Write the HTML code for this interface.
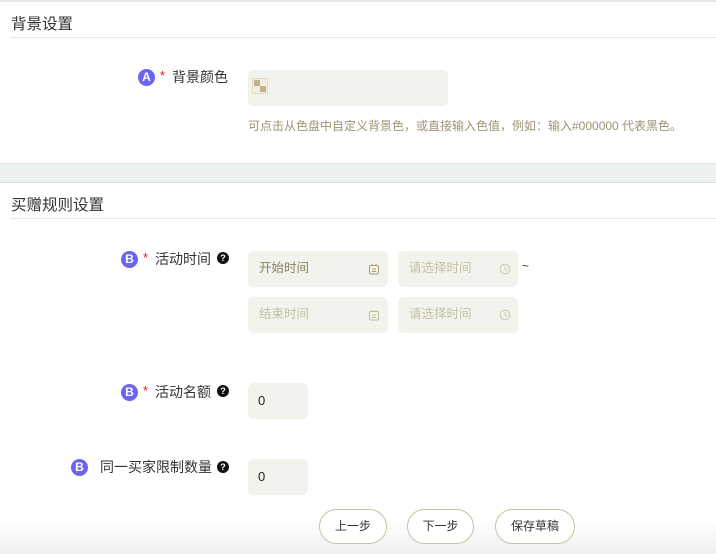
<!DOCTYPE html>
<html><head><meta charset="utf-8"><style>
*{margin:0;padding:0;box-sizing:border-box}
body{width:716px;height:554px;overflow:hidden;background:#fff;font-family:"Liberation Sans","Noto Sans CJK SC",sans-serif;position:relative;color:#333}
.a{position:absolute}
.title{font-size:15.5px;color:#333;left:11px}
.hr{height:1px;background:#e8e8e8;left:10px;right:0}
.badge{width:17px;height:17px;border-radius:50%;background:#6c63f0;color:#fff;font-size:12px;font-weight:bold;text-align:center;line-height:17px}
.star{color:#e4151e;font-size:13px}
.lab{font-size:14px;color:#333}
.q{width:12px;height:12px;border-radius:50%;background:#111;color:#fff;font-size:9px;font-weight:bold;text-align:center;line-height:12px}
.inp{background:#f1f4ec;border:1px solid #f0f2ec;border-radius:6px;font-size:12.5px;color:#9c9474;padding-left:10px;line-height:33px}
.btn{height:35px;border:1px solid #c9c0a2;border-radius:18px;font-size:12px;color:#333;text-align:center;line-height:33px;background:#fff}
</style></head><body>
<div class="a" style="left:0;right:0;top:0;height:2px;background:#e6e6e6"></div>
<div class="a title" style="top:12px">背景设置</div>
<div class="a hr" style="top:37px"></div>
<div class="a badge" style="left:138px;top:69px">A</div>
<div class="a star" style="left:160px;top:68px">*</div>
<div class="a lab" style="left:172px;top:67px">背景颜色</div>
<div class="a inp" style="left:248px;top:70px;width:200px;height:36px"></div>
<div class="a" style="left:252px;top:78px;width:16px;height:16px;border:1px solid #e4dcc0;background:#f4efdc">
<div class="a" style="left:1px;top:1px;width:6px;height:6px;background:#c0b48e"></div>
<div class="a" style="left:7px;top:7px;width:6px;height:6px;background:#c0b48e"></div></div>
<div class="a" style="left:248px;top:117px;font-size:12px;color:#9c9474">可点击从色盘中自定义背景色，或直接输入色值，例如：输入#000000 代表黑色。</div>
<div class="a" style="left:0;right:0;top:163px;height:20px;background:#ecf1f2;border-top:1px solid #e2e4e2;border-bottom:1px solid #e2e4e2"></div>
<div class="a title" style="top:193px">买赠规则设置</div>
<div class="a hr" style="top:218px"></div>

<div class="a badge" style="left:121px;top:251px">B</div>
<div class="a star" style="left:143px;top:250px">*</div>
<div class="a lab" style="left:155px;top:249px">活动时间</div>
<div class="a q" style="left:217px;top:252px">?</div>
<div class="a inp" style="left:248px;top:251px;width:140px;height:36px;color:#8a8262">开始时间</div>
<div class="a inp" style="left:398px;top:251px;width:120px;height:36px;color:#c5bfa6">请选择时间</div>
<div class="a inp" style="left:248px;top:297px;width:140px;height:36px;color:#c5bfa6">结束时间</div>
<div class="a inp" style="left:398px;top:297px;width:120px;height:36px;color:#c5bfa6">请选择时间</div>
<svg class="a" style="left:368px;top:263px" width="12" height="12" viewBox="0 0 12 12" fill="none" stroke="#a89c74" stroke-width="1"><rect x="1.5" y="2.5" width="9" height="8.5" rx="1.5"/><path d="M4 1v2M8 1v2M4 6h4M4 8.5h4"/></svg>
<svg class="a" style="left:368px;top:309px" width="12" height="12" viewBox="0 0 12 12" fill="none" stroke="#c5bb9a" stroke-width="1"><rect x="1.5" y="2.5" width="9" height="8.5" rx="1.5"/><path d="M4 1v2M8 1v2M4 6h4M4 8.5h4"/></svg>
<svg class="a" style="left:499px;top:263px" width="12" height="12" viewBox="0 0 12 12" fill="none" stroke="#cfc7aa" stroke-width="1"><circle cx="6" cy="6" r="4.8"/><path d="M6 3.2V6l2 1.5"/></svg>
<svg class="a" style="left:499px;top:309px" width="12" height="12" viewBox="0 0 12 12" fill="none" stroke="#cfc7aa" stroke-width="1"><circle cx="6" cy="6" r="4.8"/><path d="M6 3.2V6l2 1.5"/></svg>
<div class="a" style="left:522px;top:259px;font-size:12px;color:#333">~</div>

<div class="a badge" style="left:121px;top:384px">B</div>
<div class="a star" style="left:143px;top:383px">*</div>
<div class="a lab" style="left:155px;top:382px">活动名额</div>
<div class="a q" style="left:217px;top:385px">?</div>
<div class="a inp" style="left:248px;top:383px;width:60px;height:36px;color:#222;padding-left:9px;font-size:13px">0</div>

<div class="a badge" style="left:71px;top:459px">B</div>
<div class="a lab" style="left:100px;top:457px">同一买家限制数量</div>
<div class="a q" style="left:217px;top:461px">?</div>
<div class="a inp" style="left:248px;top:459px;width:60px;height:36px;color:#222;padding-left:9px;font-size:13px">0</div>

<div class="a" style="left:0;right:0;top:520px;height:34px;background:linear-gradient(#fff,#f0f0f0)"></div>
<div class="a btn" style="left:319px;top:509px;width:68px">上一步</div>
<div class="a btn" style="left:407px;top:509px;width:67px">下一步</div>
<div class="a btn" style="left:495px;top:509px;width:80px">保存草稿</div>
</body></html>
